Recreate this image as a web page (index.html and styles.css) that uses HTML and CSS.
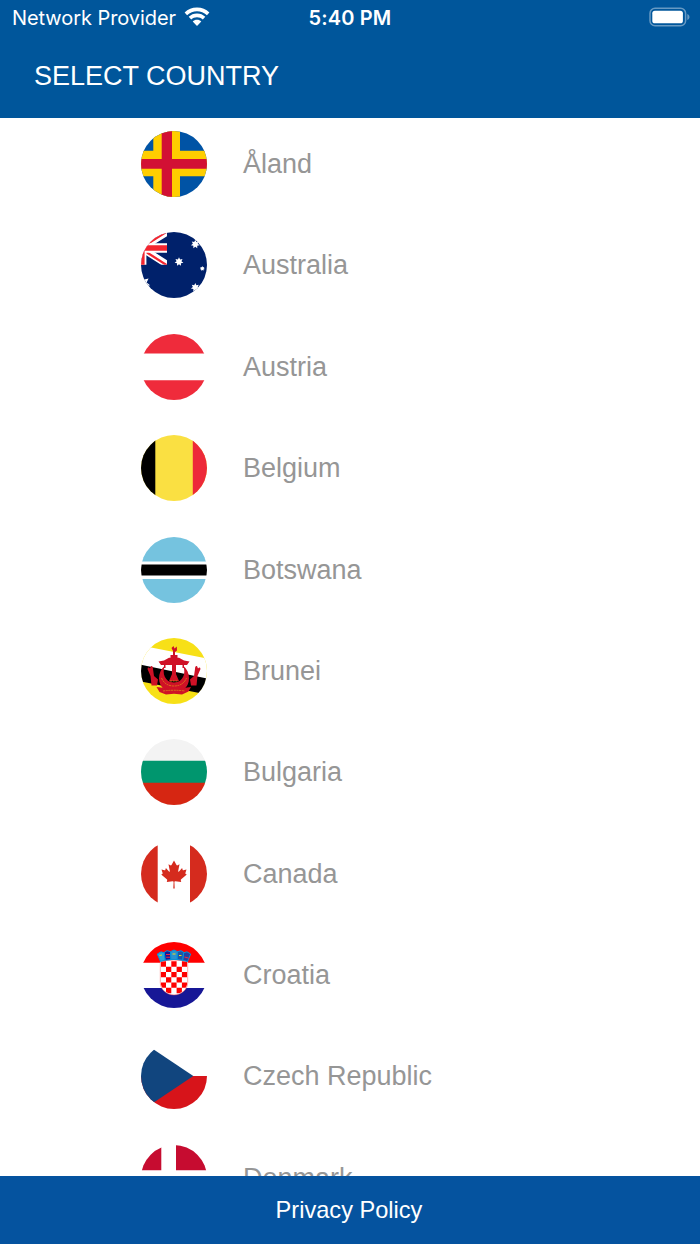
FILE: index.html
```html
<!DOCTYPE html>
<html lang="en">
<head>
    <meta charset="UTF-8">
    <title>Select country</title>
    <link rel="stylesheet" href="styles.css">
</head>
<body>
<header class="header">
    <div class="status">
        <div class="network">
            <span>Network Provider</span>
            <svg class="wifi" viewBox="0 0 26 20">
                <path d="M13 0.5C18 0.5 22 2.4 25.4 5.4L22.9 8.200C20 5.6 16.700 4.300 13 4.300S6 5.600 3.100 8.200L0.600 5.400C4 2.400 8 0.500 13 0.500Z"/>
                <path d="M13 6.500C16.400 6.500 19 7.700 21.300 9.800L18.800 12.500C17.100 11 15.300 10.200 13 10.200S8.900 11 7.200 12.500L4.700 9.800C7 7.700 9.600 6.500 13 6.500Z"/>
                <path d="M13 12.700C14.800 12.700 16.100 13.300 17.300 14.400L13 19L8.700 14.400C9.900 13.300 11.200 12.700 13 12.700Z"/>
            </svg>
        </div>
        <span class="time">5:40 PM</span>
        <svg class="battery" viewBox="0 0 42 20">
            <rect class="shell" x="1" y="1.2" width="35.600" height="17.600" rx="5"/>
            <rect class="charge" x="3.300" y="3.700" width="30.600" height="12.600" rx="2.600"/>
            <path class="tip" d="M38.300 7C41.200 8 41.200 12 38.300 13Z"/>
        </svg>
    </div>
    <h1>SELECT COUNTRY</h1>
</header>

<main class="list">
    <ul>
        <li>
            <svg class="flag" viewBox="0 0 66 66">
                <rect width="66" height="66" fill="#0053a5"/>
                <path d="M12.300 0H39V66H12.300ZM0 19.700H66V45.300H0Z" fill="#ffce00"/>
                <path d="M20.700 0H31V66H20.700ZM0 28.100H66V37.800H0Z" fill="#d21034"/>
            </svg>
            <span>Åland</span>
        </li>
        <li>
            <svg class="flag" viewBox="0 0 66 66">
                <defs>
                    <path id="star" d="M0 -1L.24 -.5L.782 -.623L.54 -.12L.975 .223L.43 .34L.434 .901L0 .55L-.434 .901L-.43 .34L-.975 .223L-.54 -.12L-.782 -.623L-.24 -.5Z"/>
                    <clipPath id="canton"><path d="M0 0H26V32.800H0Z"/></clipPath>
                </defs>
                <rect width="66" height="66" fill="#00216b"/>
                <g clip-path="url(#canton)">
                    <path d="M-2 17.500L27 -.5M-2 14.500L27 33" stroke="#fff" stroke-width="7"/>
                    <path d="M-2 17.200L27 -1.200M-2 15.400L27 33.900" stroke="#f4252f" stroke-width="2.300"/>
                    <path d="M-5 0H5.400V33H-5ZM0 11.200H26V20.800H0Z" fill="#fff"/>
                    <path d="M-5 0H3.600V33H-5ZM0 13.200H26V18.800H0Z" fill="#f4252f"/>
                </g>
                <g fill="#fff">
                    <use href="#star" transform="translate(54.300 12.200) scale(4.500)"/>
                    <use href="#star" transform="translate(38 29.800) scale(4.500)"/>
                    <use href="#star" transform="translate(61.300 36.500) scale(2.600)"/>
                    <use href="#star" transform="translate(54.300 55.500) scale(4.500)"/>
                    <use href="#star" transform="translate(1.300 51.500) scale(8)"/>
                </g>
            </svg>
            <span>Australia</span>
        </li>
        <li>
            <svg class="flag" viewBox="0 0 66 66">
                <path d="M0 0H66V19.600H0ZM0 46.200H66V66H0Z" fill="#ef2b3b"/>
            </svg>
            <span>Austria</span>
        </li>
        <li>
            <svg class="flag" viewBox="0 0 66 66">
                <rect width="66" height="66" fill="#fae042"/>
                <path d="M0 0H14.300V66H0Z"/>
                <path d="M51.800 0H66V66H51.800Z" fill="#ed2939"/>
            </svg>
            <span>Belgium</span>
        </li>
        <li>
            <svg class="flag" viewBox="0 0 66 66">
                <path d="M0 0H66V24.500H0ZM0 42H66V66H0Z" fill="#75c3df"/>
                <path d="M0 27.400H66V38.500H0Z"/>
            </svg>
            <span>Botswana</span>
        </li>
        <li>
            <svg class="flag" viewBox="0 0 66 66">
                <rect width="66" height="66" fill="#f7e017"/>
                <path d="M0 7.500L66 20.500V56L0 43Z" fill="#fff"/>
                <path d="M0 26.700L66 40.500V56.500L0 43.500Z"/>
                <g fill="#cf1126">
                    <!-- pennant, parasol and mast -->
                    <path d="M30.500 10L32.500 8L33.500 10.500L35.800 8.500L36 12.500L34 14V17H36.500V20H29.500V17H32V13Z"/>
                    <path d="M17.500 23.500L23 22.500L28 19.800H38L43 22.500L48.500 23.500L46 27H20Z"/>
                    <path d="M31 26H35V36L38 43H28L31 36Z"/>
                    <path d="M23 26H24.500V30H23ZM41.500 26H43V30H41.500Z"/>
                    <!-- crescent and scroll -->
                    <path d="M24 27.500C16 34 16 47 24 52C30 55 36 55 42 52C50 47 50 34 42 27.500C45.500 35 42 44.500 33 44.500S20.500 35 24 27.500Z"/>
                    <path d="M15.500 49L20 49.500L26 51L33 53L40 51L46 49.500L50 49L47.500 53.500L41 56.500L33 55.800L25 56.500L18.500 54Z"/>
                    <!-- hands -->
                    <path d="M6.500 31Q7 28.500 9 30.500L10 28Q12 27.500 12 31L13 38L17 41.500L16 47.500H10.500L9.500 38Z"/>
                    <path d="M59.500 31Q59 28.500 57 30.500L56 28Q54 27.500 54 31L53 38L49 41.500L50 47.500H55.500L56.500 38Z"/>
                </g>
                <path d="M20.500 40Q24 48 33 48T45.500 40M22 53Q33 51.500 44 53M29 43H37" fill="none" stroke="#e08a1a" stroke-width=".8" stroke-dasharray="2 .7"/>
            </svg>
            <span>Brunei</span>
        </li>
        <li>
            <svg class="flag" viewBox="0 0 66 66">
                <rect width="66" height="66" fill="#f3f3f3"/>
                <path d="M0 21.700H66V44H0Z" fill="#00966e"/>
                <path d="M0 43.800H66V66H0Z" fill="#d62612"/>
            </svg>
            <span>Bulgaria</span>
        </li>
        <li>
            <svg class="flag" viewBox="0 0 66 66">
                <path d="M0 0H16.700V66H0ZM49 0H66V66H49Z" fill="#d52b1e"/>
                <path d="M33 19.400L35.500 24.100Q35.900 24.700 36.600 24.300L38.500 23.300L37.200 29.900Q37 31.200 38 30.400L41.100 27.100L41.700 28.900Q41.900 29.300 42.500 29.200L45.500 28.600L44.400 32.100Q44.200 32.700 44.700 33L45.800 33.600L40.200 38.200Q39.600 38.700 39.800 39.300L40.200 41L34.300 40.200Q33.400 40.100 33.400 40.900L33.700 47.400H32.300L32.600 40.900Q32.600 40.100 31.700 40.200L25.800 41L26.200 39.300Q26.400 38.700 25.800 38.200L20.200 33.600L21.300 33Q21.800 32.700 21.600 32.100L20.500 28.600L23.500 29.200Q24.100 29.300 24.300 28.900L24.900 27.100L28 30.400Q29 31.200 28.800 29.900L27.500 23.300L29.400 24.300Q30.100 24.700 30.500 24.100Z" fill="#d52b1e"/>
            </svg>
            <span>Canada</span>
        </li>
        <li>
            <svg class="flag" viewBox="0 0 66 66">
                <defs>
                    <clipPath id="shield"><path d="M19.800 19.500Q33 17.500 46.200 19.500V40.500C46.200 47 40 52.400 33 52.400S19.800 47 19.800 40.500Z"/></clipPath>
                </defs>
                <path d="M0 0H66V20.700H0Z" fill="#f00"/>
                <path d="M0 46H66V66H0Z" fill="#171796"/>
                <path d="M19.300 19Q33 17 46.700 19V40.500C46.700 47.500 40.500 52.900 33 52.900S19.300 47.500 19.300 40.500Z" fill="#fff" stroke="#f55" stroke-width=".5"/>
                <g clip-path="url(#shield)" stroke="#f00" stroke-width="5.300" stroke-dasharray="5.300 5.300">
                    <path d="M19.700 22H47M19.700 32.600H47M19.700 43.200H47"/>
                    <path d="M25 27.300H46M25 37.900H46M25 48.500H46"/>
                </g>
                <!-- crown of five small shields -->
                <g stroke="#0093dd" stroke-width="1">
                    <path d="M16.300 12L18 11L20 9.800L23.300 10.800L24.300 18L19.500 19.500Z" fill="#2aa5d8"/>
                    <path d="M23.300 10.300L26 8.700L29.500 9.700L30 17.500L24.300 18.300Z" fill="#171796"/>
                    <path d="M29.500 9.700L33 8L36.500 9.700L36.200 17.400H30Z" fill="#2a91d0"/>
                    <path d="M36.500 9.700L40 8.700L42.700 10.300L41.800 18.300L36.200 17.500Z" fill="#1b55a8"/>
                    <path d="M42.700 10.800L46 9.800L48 11L49.700 12L46.500 19.500L41.800 18.300Z" fill="#2340a0"/>
                </g>
                <path d="M25 12.500H29M25.200 15.200H29M43.500 15L47.500 16" stroke="#f3273d" stroke-width="1.100"/>
                <path d="M18.500 13.500L21 13M31.500 12H34.500M38 13.500H40.500" stroke="#f7db17" stroke-width="1"/>
            </svg>
            <span>Croatia</span>
        </li>
        <li>
            <svg class="flag" viewBox="0 0 66 66">
                <path d="M0 33H66V66H0Z" fill="#d7141a"/>
                <path d="M0 -2L52.300 33L0 68Z" fill="#11457e"/>
            </svg>
            <span>Czech Republic</span>
        </li>
        <li>
            <svg class="flag" viewBox="0 0 66 66">
                <path d="M0 0H20.300V25.300H0ZM35 0H66V25.300H35ZM0 40.700H20.300V66H0ZM35 40.700H66V66H35Z" fill="#c60c30"/>
            </svg>
            <span>Denmark</span>
        </li>
    </ul>
</main>

<footer class="footer">
    <a href="#">Privacy Policy</a>
</footer>
</body>
</html>
```
FILE: styles.css
```css
body {
    margin: 0;
    padding: 0;
    display: flex;
    flex-direction: column;
    height: 100vh;
    overflow: hidden;
    background: white;
    font-family: "Liberation Sans", Arial, sans-serif;
}

.header {
    height: 118.4px;
    flex-shrink: 0;
    background: #00569b;
    color: white;
}

.status {
    height: 36px;
    padding: 0 9px 0 12px;
    display: grid;
    grid-template-columns: 1fr auto 1fr;
    align-items: center;
    font-family: Inter, sans-serif;
    font-size: 20px;
}

.network {
    display: flex;
    align-items: center;
    gap: 8px;
    letter-spacing: -0.07px;
}

.wifi {
    width: 26px;
    height: 20px;
    fill: white;
    margin-top: -3px;
}

.time {
    font-weight: 600;
    letter-spacing: 0.15px;
    margin: 0 3px 0 0;
}

.battery {
    width: 42px;
    height: 20px;
    justify-self: end;
    margin-top: -2px;
}

.shell {
    fill: none;
    stroke: #6699c3;
    stroke-width: 1.5;
}

.charge {
    fill: white;
}

.tip {
    fill: #6699c3;
}

.header h1 {
    margin: 0;
    padding: 24px 34px 0;
    font-size: 27px;
    font-weight: normal;
    line-height: 32px;
}

.list {
    flex: 1;
    min-height: 0;
    overflow: hidden;
}

.list ul {
    list-style: none;
    margin: -5px 0 0;
    padding: 0;
}

.list li {
    height: 101.36px;
    padding-left: 141px;
    display: flex;
    align-items: center;
    gap: 36px;
    font-size: 27px;
    color: #969696;
}

.list li span {
    padding-top: 1px;
}

.flag {
    width: 66px;
    height: 66px;
    border-radius: 50%;
    overflow: hidden;
}

.footer {
    height: 68px;
    flex-shrink: 0;
    display: flex;
    justify-content: center;
    align-items: center;
    background: #05539f;
}

.footer a {
    padding: 1px 2px 0 0;
    color: white;
    font-size: 23.6px;
    text-decoration: none;
}
```
